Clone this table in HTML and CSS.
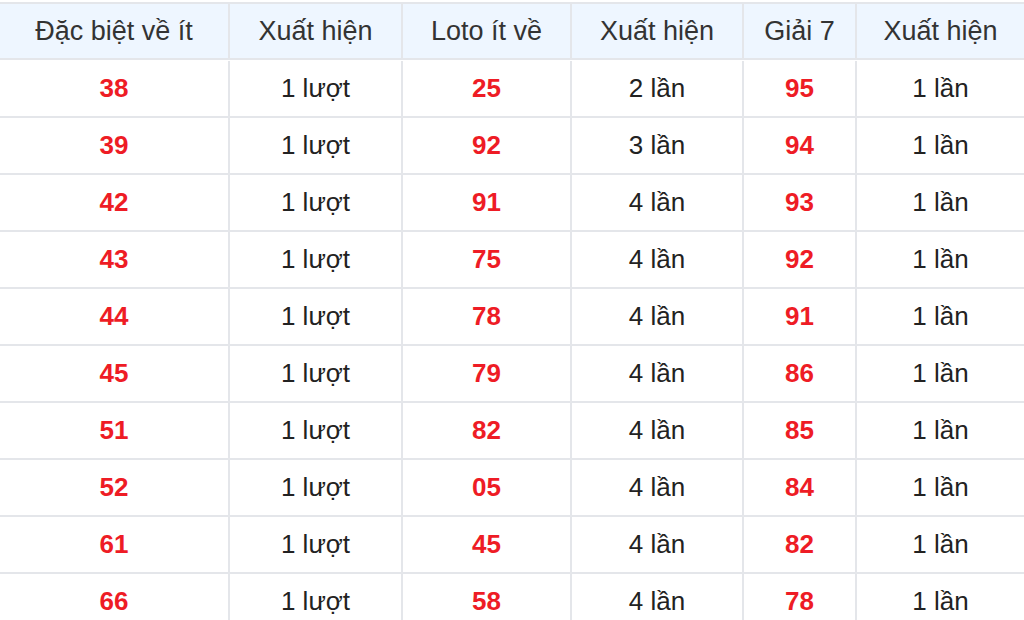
FILE: index.html
```html
<!DOCTYPE html>
<html lang="vi">
<head>
<meta charset="utf-8">
<title>Thống kê</title>
<link rel="stylesheet" href="styles.css">
</head>
<body>
<div class="table">
  <div class="cell head">Đặc biệt về ít</div>
  <div class="cell head">Xuất hiện</div>
  <div class="cell head">Loto ít về</div>
  <div class="cell head">Xuất hiện</div>
  <div class="cell head">Giải 7</div>
  <div class="cell head">Xuất hiện</div>

  <div class="cell num">38</div><div class="cell">1 lượt</div><div class="cell num">25</div><div class="cell">2 lần</div><div class="cell num">95</div><div class="cell">1 lần</div>
  <div class="cell num">39</div><div class="cell">1 lượt</div><div class="cell num">92</div><div class="cell">3 lần</div><div class="cell num">94</div><div class="cell">1 lần</div>
  <div class="cell num">42</div><div class="cell">1 lượt</div><div class="cell num">91</div><div class="cell">4 lần</div><div class="cell num">93</div><div class="cell">1 lần</div>
  <div class="cell num">43</div><div class="cell">1 lượt</div><div class="cell num">75</div><div class="cell">4 lần</div><div class="cell num">92</div><div class="cell">1 lần</div>
  <div class="cell num">44</div><div class="cell">1 lượt</div><div class="cell num">78</div><div class="cell">4 lần</div><div class="cell num">91</div><div class="cell">1 lần</div>
  <div class="cell num">45</div><div class="cell">1 lượt</div><div class="cell num">79</div><div class="cell">4 lần</div><div class="cell num">86</div><div class="cell">1 lần</div>
  <div class="cell num">51</div><div class="cell">1 lượt</div><div class="cell num">82</div><div class="cell">4 lần</div><div class="cell num">85</div><div class="cell">1 lần</div>
  <div class="cell num">52</div><div class="cell">1 lượt</div><div class="cell num">05</div><div class="cell">4 lần</div><div class="cell num">84</div><div class="cell">1 lần</div>
  <div class="cell num">61</div><div class="cell">1 lượt</div><div class="cell num">45</div><div class="cell">4 lần</div><div class="cell num">82</div><div class="cell">1 lần</div>
  <div class="cell num">66</div><div class="cell">1 lượt</div><div class="cell num">58</div><div class="cell">4 lần</div><div class="cell num">78</div><div class="cell">1 lần</div>
</div>
</body>
</html>
```

FILE: styles.css
```css
html, body {
  margin: 0;
  padding: 0;
  background: #ffffff;
  overflow: hidden;
}
body {
  padding-top: 2px;
  font-family: "Liberation Sans", Arial, sans-serif;
  color: #222222;
}
.table {
  display: grid;
  grid-template-columns: 228px 173px 169px 172px 113px 169px;
  grid-auto-rows: 57px;
  border-top: 2px solid #e4e6ea;
}
.cell {
  display: flex;
  align-items: center;
  justify-content: center;
  border-bottom: 2px solid #e4e6ea;
  border-left: 2px solid #e4e6ea;
  font-size: 26px;
  box-sizing: border-box;
  background: #ffffff;
}
.cell:nth-child(6n+1) {
  border-left: none;
}
.head {
  height: 56px;
  background: #eef6ff;
  font-size: 27px;
  color: #333333;
}
.num {
  color: #ee1c25;
  font-weight: bold;
}
```
